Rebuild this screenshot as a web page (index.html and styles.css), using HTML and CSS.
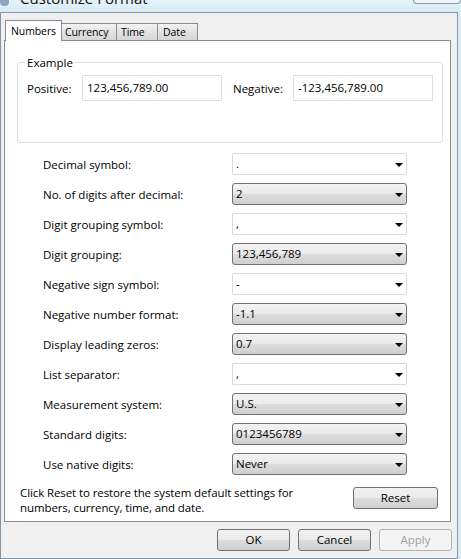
FILE: index.html
```html
<!DOCTYPE html>
<html>
<head>
<meta charset="utf-8">
<link rel="stylesheet" href="styles.css">
</head>
<body>
<div class="titlebar">
  <span class="ticon"></span>
  <span class="ttext">Customize Format</span>
  <span class="tclose"></span>
</div>
<div class="dialog">
  <div class="tabs">
    <div class="tab sel t-num">Numbers</div>
    <div class="tab t-cur">Currency</div>
    <div class="tab t-time">Time</div>
    <div class="tab t-date">Date</div>
  </div>
  <div class="panel">
    <fieldset class="group">
      <legend>Example</legend>
      <div class="ex-row">
        <span class="ex-label">Positive:</span>
        <div class="field pos">123,456,789.00</div>
        <span class="ex-label neg-label">Negative:</span>
        <div class="field">-123,456,789.00</div>
      </div>
    </fieldset>
    <div class="form">
      <span class="lbl">Decimal symbol:</span>
      <div class="combo edit">.<span class="arrow"></span></div>
      <span class="lbl">No. of digits after decimal:</span>
      <div class="combo">2<span class="arrow"></span></div>
      <span class="lbl">Digit grouping symbol:</span>
      <div class="combo edit">,<span class="arrow"></span></div>
      <span class="lbl">Digit grouping:</span>
      <div class="combo">123,456,789<span class="arrow"></span></div>
      <span class="lbl">Negative sign symbol:</span>
      <div class="combo edit">-<span class="arrow"></span></div>
      <span class="lbl">Negative number format:</span>
      <div class="combo">-1.1<span class="arrow"></span></div>
      <span class="lbl">Display leading zeros:</span>
      <div class="combo">0.7<span class="arrow"></span></div>
      <span class="lbl">List separator:</span>
      <div class="combo edit">,<span class="arrow"></span></div>
      <span class="lbl">Measurement system:</span>
      <div class="combo">U.S.<span class="arrow"></span></div>
      <span class="lbl">Standard digits:</span>
      <div class="combo">0123456789<span class="arrow"></span></div>
      <span class="lbl">Use native digits:</span>
      <div class="combo">Never<span class="arrow"></span></div>
    </div>
    <div class="reset-row">
      <p class="note">Click Reset to restore the system default settings for<br>numbers, currency, time, and date.</p>
      <div class="btn reset">Reset</div>
    </div>
  </div>
  <div class="buttons">
    <div class="btn">OK</div>
    <div class="btn">Cancel</div>
    <div class="btn disabled">Apply</div>
  </div>
</div>
</body>
</html>
```

FILE: styles.css
```css
html, body {
  margin: 0;
  padding: 0;
}
body {
  width: 461px;
  height: 559px;
  overflow: hidden;
  background: #dcedf5;
  font-family: "Open Sans", "Noto Sans", sans-serif;
  font-size: 11.5px;
  color: #000;
}
.titlebar {
  height: 12px;
  overflow: hidden;
  display: flex;
  align-items: flex-start;
  background: linear-gradient(#e6f4f9, #d6ebf3);
}
.ticon {
  width: 9px;
  height: 6px;
  background: #8ea6bd;
  border-radius: 0 0 4px 4px;
  flex: none;
}
.ttext {
  margin-left: 11px;
  margin-top: -11px;
  font-size: 15px;
  line-height: 18px;
  color: #111;
  flex: none;
}
.tclose {
  margin-left: auto;
  width: 46px;
  height: 3px;
  border: 1px solid #8b9aaa;
  border-top: none;
  border-radius: 0 0 4px 4px;
  background: #eef6fa;
  flex: none;
}
.dialog {
  width: 458px;
  height: 547px;
  box-sizing: border-box;
  border: 1px solid #8595a5;
  background: #f0f0f0;
  padding: 7px 0 0 3px;
}
.tabs {
  display: flex;
  align-items: flex-end;
  height: 20px;
  margin-left: 1px;
}
.tab {
  height: 17px;
  box-sizing: border-box;
  border: 1px solid #898c95;
  border-bottom: none;
  border-left: none;
  background: linear-gradient(#f3f3f3, #e0e0e0 60%, #d6d6d6);
  padding: 1px 0 0 3px;
  font-size: 10.5px;
  letter-spacing: -0.1px;
  line-height: 15px;
  white-space: nowrap;
  overflow: hidden;
}
.t-cur { width: 55px; }
.t-time { width: 41px; padding-left: 4px; }
.t-date { width: 40px; padding-left: 5px; }
.tab.sel {
  width: 57px;
  height: 21px;
  margin-bottom: -1px;
  border-left: 1px solid #898c95;
  border-right: 1px solid #898c95;
  background: #fff;
  padding: 3px 0 0 5px;
  line-height: 15px;
  position: relative;
  z-index: 1;
}
.panel {
  width: 447px;
  height: 482px;
  box-sizing: border-box;
  border: 1px solid #898c95;
  background: #fff;
  padding: 14px 0 0 0;
}
.group {
  margin: 0 9px 0 12px;
  padding: 0 9px;
  height: 88px;
  box-sizing: border-box;
  border: 1px solid #d5dfe5;
  border-radius: 3px;
}
.group legend {
  padding: 0 2px;
  margin-left: -2px;
  line-height: 15px;
}
.ex-row {
  display: flex;
  align-items: center;
  margin-top: 5px;
}
.ex-label {
  width: 55px;
  flex: none;
}
.neg-label {
  width: 60px;
}
.field {
  width: 140px;
  height: 26px;
  box-sizing: border-box;
  border: 1px solid #dadde2;
  padding: 3px 0 0 4px;
  line-height: 18px;
  flex: none;
}
.field.pos {
  margin-right: 11px;
}
.form {
  display: grid;
  grid-template-columns: 189px 175px;
  grid-auto-rows: 22px;
  row-gap: 8px;
  margin: 10px 0 0 38px;
  align-items: center;
}
.lbl {
  line-height: 15px;
}
.combo {
  height: 22px;
  box-sizing: border-box;
  border: 1px solid #707070;
  border-radius: 3px;
  background: linear-gradient(#f3f3f3 0%, #ebebeb 48%, #dddddd 52%, #cfcfcf 100%);
  padding: 0 0 0 3px;
  line-height: 20px;
  display: flex;
  align-items: center;
}
.combo.edit {
  border-color: #d7dbe0;
  border-radius: 1px;
  background: #fff;
}
.arrow {
  margin-left: auto;
  margin-right: 3px;
  margin-top: 1px;
  width: 0;
  height: 0;
  border-left: 4px solid transparent;
  border-right: 4px solid transparent;
  border-top: 4px solid #000;
}
.reset-row {
  display: flex;
  align-items: flex-start;
  margin-top: 10px;
  padding: 0 12px 0 15px;
}
.note {
  margin: 0;
  line-height: 15px;
  letter-spacing: -0.1px;
  flex: 1;
}
.btn {
  width: 73px;
  height: 22px;
  box-sizing: border-box;
  border: 1px solid #707070;
  border-radius: 3px;
  background: linear-gradient(#f2f2f2 0%, #ebebeb 48%, #dddddd 52%, #cfcfcf 100%);
  text-align: center;
  line-height: 20px;
}
.btn.reset {
  width: 85px;
  margin-top: 2px;
}
.btn.disabled {
  border-color: #adb2b5;
  background: #f4f4f4;
  color: #a0a0a0;
}
.buttons {
  display: flex;
  justify-content: flex-end;
  gap: 8px;
  margin-top: 7px;
  padding-right: 5px;
}
```
